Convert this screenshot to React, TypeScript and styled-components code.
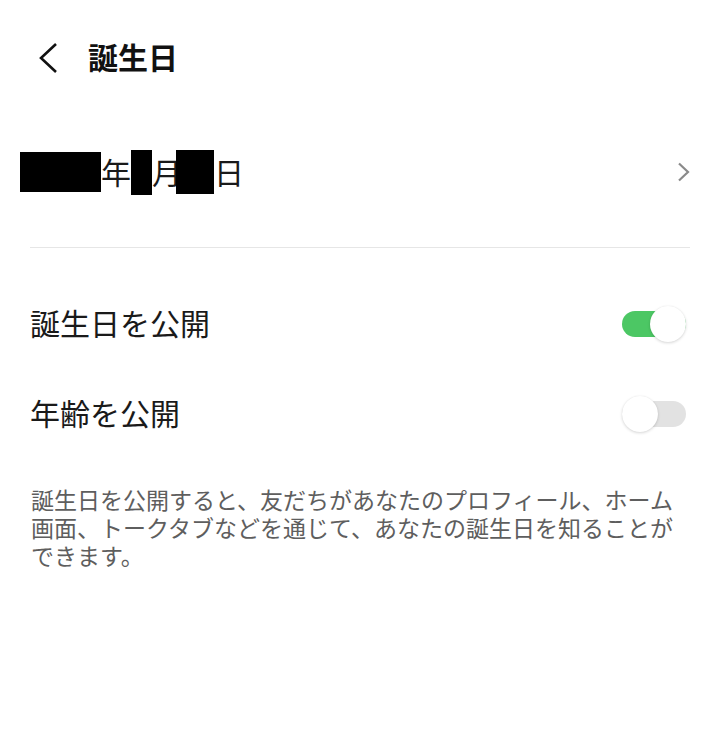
import React, { useState } from "react";
import styled, { createGlobalStyle } from "styled-components";

const GlobalStyle = createGlobalStyle`
  html, body {
    margin: 0;
    padding: 0;
    background: #ffffff;
  }
  body {
    font-family: "Noto Sans CJK JP", "Noto Sans", "Liberation Sans", sans-serif;
    color: #111111;
  }
  * { box-sizing: border-box; }
`;

const Page = styled.div`
  width: 720px;
  min-height: 755px;
  background: #ffffff;
  display: flex;
  flex-direction: column;
`;

const Header = styled.header`
  height: 115px;
  display: flex;
  align-items: center;
  padding-left: 38px;
`;

const BackButton = styled.button`
  border: none;
  background: none;
  padding: 0;
  width: 20px;
  height: 32px;
  display: flex;
  align-items: center;
  justify-content: center;
  cursor: pointer;
`;

const Title = styled.h1`
  margin: -3px 0 0 30px;
  font-size: 30px;
  line-height: 36px;
  font-weight: 700;
  color: #111111;
`;

const DateRow = styled.div`
  height: 114px;
  display: flex;
  align-items: center;
  padding: 0 30px 0 20px;
`;

const DateValue = styled.div`
  flex: 1;
  display: flex;
  align-items: center;
  font-size: 30px;
  line-height: 40px;
  color: #1a1a1a;
`;

const Redact = styled.span<{ $w: number; $h: number; $ml?: number }>`
  display: inline-block;
  width: ${(p) => p.$w}px;
  height: ${(p) => p.$h}px;
  margin-left: ${(p) => p.$ml ?? 0}px;
  background: #000000;
  position: relative;
  z-index: 1;
`;

const Unit = styled.span`
  display: inline-block;
  margin-top: -3px;
`;

const Divider = styled.hr`
  margin: 18px 30px 0 30px;
  border: none;
  height: 1px;
  background: #e6e6e6;
`;

const List = styled.div`
  padding-top: 31px;
  display: flex;
  flex-direction: column;
`;

const ToggleRow = styled.div`
  height: 90px;
  display: flex;
  align-items: center;
  justify-content: space-between;
  padding: 0 34px 0 30px;
`;

const RowLabel = styled.span`
  font-size: 30px;
  line-height: 36px;
  color: #1a1a1a;
  margin-top: -4px;
`;

const SwitchTrack = styled.button<{ $on: boolean }>`
  position: relative;
  width: 64px;
  height: 26px;
  border: none;
  padding: 0;
  border-radius: 13px;
  background: ${(p) => (p.$on ? "#4cc764" : "#e2e2e2")};
  cursor: pointer;
`;

const SwitchKnob = styled.span<{ $on: boolean }>`
  position: absolute;
  top: 50%;
  left: ${(p) => (p.$on ? "28px" : "0px")};
  width: 36px;
  height: 36px;
  margin-top: -18px;
  border-radius: 50%;
  background: #ffffff;
  box-shadow: 0 1px 3px rgba(0, 0, 0, 0.16), 0 0 1px rgba(0, 0, 0, 0.08);
`;

const Description = styled.p`
  margin: 26px 30px 0 31px;
  font-size: 23px;
  line-height: 28px;
  color: #5e5e5e;
`;

const Switch: React.FC<{ on: boolean; onToggle: () => void }> = ({ on, onToggle }) => (
  <SwitchTrack $on={on} onClick={onToggle} aria-pressed={on}>
    <SwitchKnob $on={on} />
  </SwitchTrack>
);

export default function App() {
  const [showBirthday, setShowBirthday] = useState(true);
  const [showAge, setShowAge] = useState(false);

  return (
    <Page>
      <GlobalStyle />
      <Header>
        <BackButton aria-label="back">
          <svg width="20" height="32" viewBox="0 0 20 32" fill="none">
            <path d="M18 2 L3 16 L18 30" stroke="#111" strokeWidth="2.6" strokeLinecap="butt" strokeLinejoin="miter" />
          </svg>
        </BackButton>
        <Title>誕生日</Title>
      </Header>

      <DateRow>
        <DateValue>
          <Redact $w={81} $h={40} />
          <Unit>年</Unit>
          <Redact $w={21} $h={45} />
          <Unit>月</Unit>
          <Redact $w={38} $h={44} $ml={-6} />
          <Unit>日</Unit>
        </DateValue>
        <svg width="13" height="20" viewBox="0 0 13 20" fill="none">
          <path d="M2 1.5 L11 10 L2 18.5" stroke="#8a8a8a" strokeWidth="2.2" />
        </svg>
      </DateRow>

      <Divider />

      <List>
        <ToggleRow>
          <RowLabel>誕生日を公開</RowLabel>
          <Switch on={showBirthday} onToggle={() => setShowBirthday((v) => !v)} />
        </ToggleRow>
        <ToggleRow>
          <RowLabel>年齢を公開</RowLabel>
          <Switch on={showAge} onToggle={() => setShowAge((v) => !v)} />
        </ToggleRow>
      </List>

      <Description>
        誕生日を公開すると、友だちがあなたのプロフィール、ホーム画面、トークタブなどを通じて、あなたの誕生日を知ることができます。
      </Description>
    </Page>
  );
}
